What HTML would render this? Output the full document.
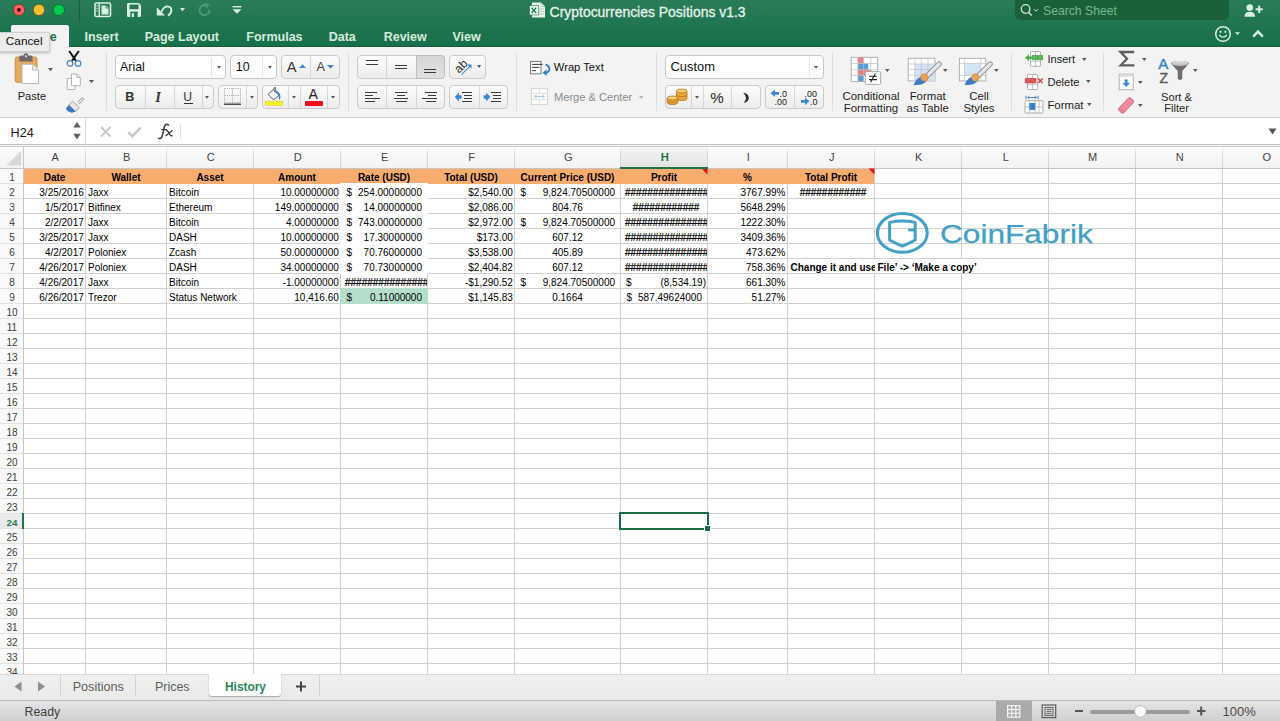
<!DOCTYPE html>
<html><head><meta charset="utf-8"><style>
html,body{margin:0;padding:0;}
body{width:1280px;height:721px;overflow:hidden;position:relative;background:#fff;font-family:"Liberation Sans", sans-serif;}
</style></head><body>
<div style="position:absolute;left:0px;top:0px;width:1280px;height:47px;background:linear-gradient(#297c58,#16704a);"></div><div style="position:absolute;left:0px;top:46px;width:1280px;height:1px;background:#125a38;"></div><svg style="position:absolute;left:0px;top:0px;" width="80" height="22" viewBox="0 0 80 22">
<circle cx="18.9" cy="9.9" r="5.7" fill="#ff6159" stroke="#6e3a2e" stroke-width="0.9"/>
<circle cx="18.9" cy="9.9" r="1.9" fill="#4d0000"/>
<circle cx="38.9" cy="9.9" r="5.7" fill="#ffbd2e" stroke="#5e5a22" stroke-width="0.9"/>
<circle cx="58.9" cy="9.9" r="5.7" fill="#00ca4e" stroke="#0f6b32" stroke-width="0.9"/>
</svg><div style="position:absolute;left:79px;top:0px;width:1px;height:22px;background:#1a5f3a;"></div><svg style="position:absolute;left:94px;top:2px;" width="18" height="16" viewBox="0 0 18 16">
<rect x="1" y="1" width="15.5" height="13.5" rx="1.5" fill="none" stroke="#d9efe2" stroke-width="1.6"/>
<line x1="5.2" y1="1" x2="5.2" y2="14.5" stroke="#d9efe2" stroke-width="1.4"/>
<rect x="2.4" y="3.3" width="1.3" height="1.2" fill="#d9efe2"/><rect x="2.4" y="5.8" width="1.3" height="1.2" fill="#d9efe2"/><rect x="2.4" y="8.3" width="1.3" height="1.2" fill="#d9efe2"/>
<path d="M7.5 3.5 H12.2 L14.5 5.8 V12.5 H7.5 Z" fill="#d9efe2"/>
<path d="M12 3.5 V6 H14.5" fill="none" stroke="#227a4b" stroke-width="0.8"/>
</svg><svg style="position:absolute;left:126px;top:2px;" width="16" height="16" viewBox="0 0 16 16">
<path d="M1 2.2 Q1 1 2.2 1 H12.8 L15 3.2 V13.8 Q15 15 13.8 15 H2.2 Q1 15 1 13.8 Z" fill="#d9efe2"/>
<rect x="3.5" y="2.6" width="9" height="4.6" fill="#227a4b"/>
<rect x="4.3" y="9.6" width="7.4" height="5.4" fill="#227a4b"/>
<rect x="5.8" y="11.3" width="2.2" height="3.7" fill="#d9efe2"/>
</svg><svg style="position:absolute;left:155px;top:3px;" width="34" height="14" viewBox="0 0 34 14">
<path d="M6.6 8.6 Q9 3.4 12.4 3.4 Q16.4 3.6 16.4 7.4 Q16.2 10.6 13 12.6" fill="none" stroke="#d9efe2" stroke-width="1.9"/>
<path d="M1.8 4.2 L1.8 12.4 L10 12.4 Z" fill="#d9efe2"/>
<path d="M25 5 L30 5 L27.5 8.2 Z" fill="#d9efe2"/>
</svg><svg style="position:absolute;left:198px;top:3px;" width="15" height="14" viewBox="0 0 15 14">
<path d="M11.5 6.8 A5 5 0 1 1 8 2.3" fill="none" stroke="#4e9a70" stroke-width="1.9"/>
<path d="M6.5 0 L12 1.2 L8 5.5 Z" fill="#4e9a70"/>
</svg><svg style="position:absolute;left:231px;top:5px;" width="12" height="10" viewBox="0 0 12 10">
<rect x="1.5" y="1" width="9" height="1.4" fill="#d9efe2"/>
<path d="M1.5 4.2 H10.5 L6 8.8 Z" fill="#d9efe2"/>
</svg><svg style="position:absolute;left:529px;top:2px;" width="17" height="16" viewBox="0 0 17 16">
<path d="M3 0.5 H12 L16 4.5 V15.5 H3 Z" fill="#e8f3ec"/>
<path d="M12 0.5 V4.5 H16" fill="none" stroke="#9cc9ae" stroke-width="0.8"/>
<g stroke="#9cc9ae" stroke-width="0.8"><line x1="9" y1="7" x2="15" y2="7"/><line x1="9" y1="9.5" x2="15" y2="9.5"/><line x1="9" y1="12" x2="15" y2="12"/></g>
<rect x="0.5" y="3.5" width="9" height="9.5" fill="#e8f3ec" stroke="#227a4b" stroke-width="0.6"/>
<path d="M2.6 5.6 L7.2 11 M7.2 5.6 L2.6 11" stroke="#227a4b" stroke-width="1.3"/>
</svg><div style="position:absolute;top:1.97px;font-size:13.95px;line-height:20px;color:#e6f2ea;font-weight:normal;white-space:pre;-webkit-text-stroke:0.3px #e6f2ea;left:549.6px;">Cryptocurrencies Positions v1.3</div><div style="position:absolute;left:1015px;top:0px;width:214px;height:20px;background:#1b6138;border-radius:0 0 5px 5px;"></div><svg style="position:absolute;left:1019px;top:3px;" width="22" height="14" viewBox="0 0 22 14">
<circle cx="6.6" cy="6" r="4.3" fill="none" stroke="#cfe6d8" stroke-width="1.3"/>
<line x1="9.6" y1="9.2" x2="12.6" y2="12.4" stroke="#cfe6d8" stroke-width="1.5"/>
<path d="M15 6.2 L17 8.2 L19 6.2" fill="none" stroke="#cfe6d8" stroke-width="1"/>
</svg><div style="position:absolute;top:0.67px;font-size:12.2px;line-height:20px;color:#79b793;font-weight:normal;white-space:pre;left:1043px;">Search Sheet</div><svg style="position:absolute;left:1243px;top:3px;" width="21" height="15" viewBox="0 0 21 15">
<circle cx="6.8" cy="4.6" r="3.3" fill="#d9efe2"/>
<path d="M1.5 13.8 Q1.5 8.8 6.8 8.8 Q12 8.8 12 13.8 Z" fill="#d9efe2"/>
<rect x="12.6" y="5.3" width="7.2" height="2" fill="#d9efe2"/>
<rect x="15.2" y="2.6" width="2" height="7.4" fill="#d9efe2"/>
</svg><div style="position:absolute;left:11px;top:25px;width:58px;height:22px;background:#f3f3f3;border-radius:2px 2px 0 0;"></div><div style="position:absolute;top:26.97px;font-size:12.5px;line-height:20px;color:#217346;font-weight:bold;white-space:pre;left:22px;">Home</div><div style="position:absolute;top:26.97px;font-size:12.5px;line-height:20px;color:#d7ebde;font-weight:bold;white-space:pre;left:84.5px;">Insert</div><div style="position:absolute;top:26.97px;font-size:12.5px;line-height:20px;color:#d7ebde;font-weight:bold;white-space:pre;left:144.7px;">Page Layout</div><div style="position:absolute;top:26.97px;font-size:12.5px;line-height:20px;color:#d7ebde;font-weight:bold;white-space:pre;left:246.3px;">Formulas</div><div style="position:absolute;top:26.97px;font-size:12.5px;line-height:20px;color:#d7ebde;font-weight:bold;white-space:pre;left:328.7px;">Data</div><div style="position:absolute;top:26.97px;font-size:12.5px;line-height:20px;color:#d7ebde;font-weight:bold;white-space:pre;left:383.7px;">Review</div><div style="position:absolute;top:26.97px;font-size:12.5px;line-height:20px;color:#d7ebde;font-weight:bold;white-space:pre;left:452.5px;">View</div><svg style="position:absolute;left:1213px;top:24px;" width="52" height="20" viewBox="0 0 52 20">
<circle cx="10" cy="10" r="7.3" fill="none" stroke="#d9efe2" stroke-width="1.5"/>
<circle cx="7.6" cy="7.8" r="1.1" fill="#d9efe2"/><circle cx="12.4" cy="7.8" r="1.1" fill="#d9efe2"/>
<path d="M6.2 11 Q10 15.2 13.8 11" fill="none" stroke="#d9efe2" stroke-width="1.4"/>
<path d="M22 8.2 L27 8.2 L24.5 11 Z" fill="#d9efe2"/>
<path d="M40.2 12.6 L45 7.6 L49.8 12.6" fill="none" stroke="#d9efe2" stroke-width="2.4"/>
</svg><div style="position:absolute;left:0px;top:47px;width:1280px;height:70px;background:#f3f3f3;"></div><div style="position:absolute;left:0px;top:117px;width:1280px;height:1px;background:#cfcfcf;"></div><div style="position:absolute;left:106px;top:53px;width:1px;height:58px;background:#dedede;"></div><div style="position:absolute;left:348px;top:53px;width:1px;height:58px;background:#dedede;"></div><div style="position:absolute;left:516px;top:53px;width:1px;height:58px;background:#dedede;"></div><div style="position:absolute;left:656px;top:53px;width:1px;height:58px;background:#dedede;"></div><div style="position:absolute;left:832px;top:53px;width:1px;height:58px;background:#dedede;"></div><div style="position:absolute;left:1011px;top:53px;width:1px;height:58px;background:#dedede;"></div><div style="position:absolute;left:1103px;top:53px;width:1px;height:58px;background:#dedede;"></div><svg style="position:absolute;left:13px;top:52px;" width="27" height="33" viewBox="0 0 27 33">
<rect x="2.2" y="5" width="21.8" height="25.2" rx="1.8" fill="#e6a95e" stroke="#c3873c" stroke-width="0.9"/>
<path d="M6.3 9.6 V5.2 Q6.3 3.6 8 3.6 H10.6 Q11 1.2 13 1.2 Q15 1.2 15.4 3.6 H18 Q19.6 3.6 19.6 5.2 V9.6 Z" fill="#6b6b6b"/>
<circle cx="13" cy="4.2" r="1" fill="#e3e3e3"/>
<path d="M9 12.2 H19.6 L25.5 18 V31.5 H9 Z" fill="#fff" stroke="#b3b3b3" stroke-width="0.9"/>
<path d="M19.6 12.2 V18 H25.5" fill="#efefef" stroke="#b3b3b3" stroke-width="0.9"/>
</svg><svg style="position:absolute;left:47px;top:67.4px;" width="7" height="5.2" viewBox="0 0 7 5.2"><path d="M1 1 H6 L3.5 4.2 Z" fill="#5a5a5a"/></svg><div style="position:absolute;top:85.75px;font-size:11.1px;line-height:20px;color:#1e1e1e;font-weight:normal;white-space:pre;left:17.7px;">Paste</div><svg style="position:absolute;left:65px;top:50px;" width="18" height="18" viewBox="0 0 18 18">
<path d="M4.2 1 L11 10.8 M13.8 1 L7 10.8" stroke="#1a1a1a" stroke-width="2.1"/>
<circle cx="5" cy="13.4" r="2.8" fill="none" stroke="#3f84c7" stroke-width="1.2"/>
<circle cx="13" cy="13.4" r="2.8" fill="none" stroke="#3f84c7" stroke-width="1.2"/>
</svg><svg style="position:absolute;left:66px;top:73px;" width="16" height="18" viewBox="0 0 16 18">
<path d="M1.2 5.5 H6.5 L9 8 V16.5 H1.2 Z" fill="#fff" stroke="#a9a9a9" stroke-width="0.9"/>
<path d="M5.5 1 H10.8 L14.3 4.5 V12.7 H5.5 Z" fill="#fff" stroke="#a9a9a9" stroke-width="0.9"/>
<path d="M10.8 1 V4.5 H14.3" fill="none" stroke="#a9a9a9" stroke-width="0.8"/>
</svg><svg style="position:absolute;left:88px;top:79.3px;" width="7" height="5.2" viewBox="0 0 7 5.2"><path d="M1 1 H6 L3.5 4.2 Z" fill="#5a5a5a"/></svg><svg style="position:absolute;left:65px;top:96px;" width="19" height="17" viewBox="0 0 19 17">
<path d="M12.6 6.4 L16.2 2.6 Q17.4 1.4 18.2 2.2 Q19 3 17.8 4.2 L14.2 8" fill="#ececec" stroke="#8a8a8a" stroke-width="0.9"/>
<path d="M7.6 5.2 L14.2 11.6 L10.6 15.4 L3.8 9 Z" fill="#e8e8e8" stroke="#8f8f8f" stroke-width="0.8"/>
<path d="M0.8 12.6 L3.8 9 L10.6 15.4 L7 16.8 Q3 16.4 0.8 12.6 Z" fill="#3b7bc2"/>
</svg><div style="position:absolute;left:115px;top:55px;width:111px;height:24px;background:#fff;border:1px solid #c8c8c8;border-radius:4px;box-sizing:border-box;"></div><div style="position:absolute;left:211px;top:58px;width:1px;height:18px;background:#e4e4e4;"></div><svg style="position:absolute;left:215.6px;top:65.3px;" width="6" height="4.8" viewBox="0 0 6 4.8"><path d="M1 1 H5 L3.0 3.8 Z" fill="#5a5a5a"/></svg><div style="position:absolute;top:56.50px;font-size:12.4px;line-height:20px;color:#111;font-weight:normal;white-space:pre;left:120px;">Arial</div><div style="position:absolute;left:230px;top:55px;width:47px;height:24px;background:#fff;border:1px solid #c8c8c8;border-radius:4px;box-sizing:border-box;"></div><div style="position:absolute;left:262px;top:58px;width:1px;height:18px;background:#e4e4e4;"></div><svg style="position:absolute;left:266.5px;top:65.3px;" width="6" height="4.8" viewBox="0 0 6 4.8"><path d="M1 1 H5 L3.0 3.8 Z" fill="#5a5a5a"/></svg><div style="position:absolute;top:56.50px;font-size:12.4px;line-height:20px;color:#111;font-weight:normal;white-space:pre;left:235.8px;">10</div><div style="position:absolute;left:281px;top:55px;width:59px;height:24px;background:linear-gradient(#fcfcfc,#ececec);border:1px solid #cbcbcb;border-radius:4px;box-sizing:border-box;"></div><div style="position:absolute;left:310px;top:56px;width:1px;height:22px;background:#d6d6d6;"></div><div style="position:absolute;top:57.34px;font-size:14.6px;line-height:20px;color:#333;font-weight:normal;white-space:pre;left:286.8px;">A</div><svg style="position:absolute;left:298px;top:63px;" width="9" height="6" viewBox="0 0 9 6"><path d="M1 5 L4.5 1.2 L8 5 Z" fill="#3b88d0"/></svg><div style="position:absolute;top:57.43px;font-size:12.6px;line-height:20px;color:#444;font-weight:normal;white-space:pre;left:316.6px;">A</div><svg style="position:absolute;left:326.3px;top:64.3px;" width="9" height="6" viewBox="0 0 9 6"><path d="M1 1 H8 L4.5 4.8 Z" fill="#3b88d0"/></svg><div style="position:absolute;left:115px;top:85px;width:99px;height:24px;background:linear-gradient(#fcfcfc,#ececec);border:1px solid #cbcbcb;border-radius:4px;box-sizing:border-box;"></div><div style="position:absolute;left:144.8px;top:86px;width:1px;height:22px;background:#d6d6d6;"></div><div style="position:absolute;left:173.7px;top:86px;width:1px;height:22px;background:#d6d6d6;"></div><div style="position:absolute;left:201.6px;top:86px;width:1px;height:22px;background:#d6d6d6;"></div><div style="position:absolute;top:87.23px;font-size:12.6px;line-height:20px;color:#333;font-weight:bold;white-space:pre;left:125.3px;">B</div><div style="position:absolute;top:86.78px;font-size:14.5px;line-height:20px;color:#333;font-weight:bold;white-space:pre;font-family:'Liberation Serif',serif;left:155.2px;"><i>I</i></div><div style="position:absolute;top:87.17px;font-size:12.2px;line-height:20px;color:#333;font-weight:normal;white-space:pre;left:183.3px;">U</div><div style="position:absolute;left:183.5px;top:103px;width:9px;height:1.3px;background:#333;"></div><svg style="position:absolute;left:204.4px;top:94.6px;" width="6" height="4.8" viewBox="0 0 6 4.8"><path d="M1 1 H5 L3.0 3.8 Z" fill="#5a5a5a"/></svg><div style="position:absolute;left:218px;top:85px;width:40px;height:24px;background:linear-gradient(#fcfcfc,#ececec);border:1px solid #cbcbcb;border-radius:4px;box-sizing:border-box;"></div><div style="position:absolute;left:246px;top:86px;width:1px;height:22px;background:#d6d6d6;"></div><svg style="position:absolute;left:223px;top:87px;" width="20" height="19" viewBox="0 0 20 19">
<g stroke="#9a9a9a" stroke-width="0.9" stroke-dasharray="1,1.2" fill="none">
<rect x="1.5" y="1.5" width="16" height="14"/><line x1="9.5" y1="1.5" x2="9.5" y2="15.5"/><line x1="1.5" y1="8.5" x2="17.5" y2="8.5"/></g>
<line x1="1" y1="17.2" x2="18" y2="17.2" stroke="#333" stroke-width="1.3"/>
</svg><svg style="position:absolute;left:248.5px;top:94.6px;" width="6" height="4.8" viewBox="0 0 6 4.8"><path d="M1 1 H5 L3.0 3.8 Z" fill="#5a5a5a"/></svg><div style="position:absolute;left:262px;top:85px;width:78px;height:24px;background:linear-gradient(#fcfcfc,#ececec);border:1px solid #cbcbcb;border-radius:4px;box-sizing:border-box;"></div><div style="position:absolute;left:288px;top:86px;width:1px;height:22px;background:#d6d6d6;"></div><div style="position:absolute;left:300px;top:86px;width:1px;height:22px;background:#d6d6d6;"></div><div style="position:absolute;left:327.3px;top:86px;width:1px;height:22px;background:#d6d6d6;"></div><svg style="position:absolute;left:264px;top:86px;" width="21" height="20" viewBox="0 0 21 20">
<path d="M4.2 8.4 L9.4 3.6 L14.8 9.2 L9.6 14 Z" fill="#fdfdfd" stroke="#555" stroke-width="1"/>
<path d="M9.8 3.4 Q10.4 0.8 11.2 1.4 V5.6" fill="none" stroke="#444" stroke-width="1"/>
<path d="M10.2 5 Q14.6 5.6 15.6 10.2 Q15.8 12.4 15 13" fill="none" stroke="#3b80c6" stroke-width="1.7"/>
<rect x="1.2" y="15.1" width="17.6" height="4.4" fill="#f4ef2a" stroke="#dcd42a" stroke-width="0.5"/>
</svg><svg style="position:absolute;left:290.7px;top:94.6px;" width="6" height="4.8" viewBox="0 0 6 4.8"><path d="M1 1 H5 L3.0 3.8 Z" fill="#5a5a5a"/></svg><div style="position:absolute;top:84.18px;font-size:14.2px;line-height:20px;color:#222;font-weight:normal;white-space:pre;left:308.6px;">A</div><div style="position:absolute;left:305.2px;top:101px;width:17.6px;height:4.8px;background:#f2101a;border-radius:1px;"></div><svg style="position:absolute;left:330.4px;top:94.6px;" width="6" height="4.8" viewBox="0 0 6 4.8"><path d="M1 1 H5 L3.0 3.8 Z" fill="#5a5a5a"/></svg><div style="position:absolute;left:357px;top:55px;width:88px;height:24px;background:linear-gradient(#fcfcfc,#ececec);border:1px solid #cbcbcb;border-radius:4px;box-sizing:border-box;"></div><div style="position:absolute;left:415.7px;top:55px;width:29.3px;height:24px;background:linear-gradient(#d5d5d5,#e0e0e0);border:1px solid #bdbdbd;border-radius:0 4px 4px 0;box-sizing:border-box;"></div><div style="position:absolute;left:386.4px;top:56px;width:1px;height:22px;background:#d6d6d6;"></div><div style="position:absolute;left:366px;top:60px;width:12px;height:1px;background:#3a3a3a;"></div><div style="position:absolute;left:366px;top:64px;width:12px;height:1px;background:#3a3a3a;"></div><div style="position:absolute;left:395px;top:65px;width:12px;height:1px;background:#3a3a3a;"></div><div style="position:absolute;left:395px;top:68px;width:12px;height:1px;background:#3a3a3a;"></div><div style="position:absolute;left:424px;top:69px;width:12px;height:1px;background:#3a3a3a;"></div><div style="position:absolute;left:424px;top:72px;width:12px;height:1px;background:#3a3a3a;"></div><div style="position:absolute;left:449px;top:55px;width:37px;height:24px;background:linear-gradient(#fcfcfc,#ececec);border:1px solid #cbcbcb;border-radius:4px;box-sizing:border-box;"></div><svg style="position:absolute;left:453px;top:58px;" width="22" height="18" viewBox="0 0 22 18">
<text x="0" y="0" transform="translate(6 15.8) rotate(-45)" font-family="Liberation Sans" font-size="12" fill="#2a2a2a">ab</text>
<path d="M8.5 16.6 L17.8 7.3" stroke="#3b88d0" stroke-width="1.1"/>
<path d="M14.2 6.6 L18.6 6.4 L18.4 10.8 Z" fill="#3b88d0"/>
</svg><svg style="position:absolute;left:476px;top:64.3px;" width="6.3" height="5" viewBox="0 0 6.3 5"><path d="M1 1 H5.3 L3.15 4 Z" fill="#5a5a5a"/></svg><div style="position:absolute;left:357px;top:85px;width:88px;height:24px;background:linear-gradient(#fcfcfc,#ececec);border:1px solid #cbcbcb;border-radius:4px;box-sizing:border-box;"></div><div style="position:absolute;left:386.4px;top:86px;width:1px;height:22px;background:#d6d6d6;"></div><div style="position:absolute;left:415.7px;top:86px;width:1px;height:22px;background:#d6d6d6;"></div><div style="position:absolute;left:365px;top:92px;width:12px;height:1px;background:#3a3a3a;"></div><div style="position:absolute;left:365px;top:95px;width:8px;height:1px;background:#3a3a3a;"></div><div style="position:absolute;left:365px;top:98px;width:15px;height:1px;background:#3a3a3a;"></div><div style="position:absolute;left:365px;top:101px;width:10px;height:1px;background:#3a3a3a;"></div><div style="position:absolute;left:395px;top:92px;width:12px;height:1px;background:#3a3a3a;"></div><div style="position:absolute;left:397px;top:95px;width:8px;height:1px;background:#3a3a3a;"></div><div style="position:absolute;left:394px;top:98px;width:14px;height:1px;background:#3a3a3a;"></div><div style="position:absolute;left:396px;top:101px;width:11px;height:1px;background:#3a3a3a;"></div><div style="position:absolute;left:425px;top:92px;width:12px;height:1px;background:#3a3a3a;"></div><div style="position:absolute;left:428px;top:95px;width:8px;height:1px;background:#3a3a3a;"></div><div style="position:absolute;left:422px;top:98px;width:15px;height:1px;background:#3a3a3a;"></div><div style="position:absolute;left:426px;top:101px;width:10px;height:1px;background:#3a3a3a;"></div><div style="position:absolute;left:449px;top:85px;width:59px;height:24px;background:linear-gradient(#fcfcfc,#ececec);border:1px solid #cbcbcb;border-radius:4px;box-sizing:border-box;"></div><div style="position:absolute;left:478.5px;top:86px;width:1px;height:22px;background:#d6d6d6;"></div><div style="position:absolute;left:462px;top:92px;width:10px;height:1px;background:#3a3a3a;"></div><div style="position:absolute;left:464px;top:95px;width:8px;height:1px;background:#3a3a3a;"></div><div style="position:absolute;left:464px;top:98px;width:8px;height:1px;background:#3a3a3a;"></div><div style="position:absolute;left:462px;top:101px;width:10px;height:1px;background:#3a3a3a;"></div><div style="position:absolute;left:491px;top:92px;width:10px;height:1px;background:#3a3a3a;"></div><div style="position:absolute;left:493px;top:95px;width:8px;height:1px;background:#3a3a3a;"></div><div style="position:absolute;left:493px;top:98px;width:8px;height:1px;background:#3a3a3a;"></div><div style="position:absolute;left:491px;top:101px;width:10px;height:1px;background:#3a3a3a;"></div><svg style="position:absolute;left:454px;top:91px;" width="8" height="12" viewBox="0 0 8 12"><path d="M0.8 6 L5 1.6 V4.2 H7.6 V7.8 H5 V10.4 Z" fill="#3b88d0"/></svg><svg style="position:absolute;left:483px;top:91px;" width="8" height="12" viewBox="0 0 8 12"><path d="M7.4 6 L3.2 1.6 V4.2 H0.6 V7.8 H3.2 V10.4 Z" fill="#3b88d0"/></svg><svg style="position:absolute;left:529px;top:60px;" width="23" height="16" viewBox="0 0 23 16">
<rect x="1.6" y="1.4" width="10.4" height="12.4" fill="#fff" stroke="#6a6a6a" stroke-width="0.9"/>
<g stroke="#333" stroke-width="1"><line x1="3.2" y1="4.4" x2="13.6" y2="4.4"/><line x1="3.2" y1="7.4" x2="10.4" y2="7.4"/><line x1="3.2" y1="10.6" x2="7.2" y2="10.6"/></g>
<path d="M16.6 4.6 Q20.4 5.6 20.4 9 Q20.2 12.4 16.6 12.8" fill="none" stroke="#2f7bc4" stroke-width="1.8"/>
<path d="M13.4 12.8 L17.6 9.6 V15.8 Z" fill="#2f7bc4"/>
</svg><div style="position:absolute;top:56.92px;font-size:11.2px;line-height:20px;color:#111;font-weight:normal;white-space:pre;left:553.8px;">Wrap Text</div><svg style="position:absolute;left:530px;top:87px;" width="19" height="19" viewBox="0 0 19 19">
<rect x="1.5" y="1.4" width="16" height="16.2" fill="#fbfbfb" stroke="#d2d2d2" stroke-width="0.9"/>
<g stroke="#dadada" stroke-width="0.8"><line x1="1.5" y1="6.5" x2="17.5" y2="6.5"/><line x1="1.5" y1="12.4" x2="17.5" y2="12.4"/><line x1="9.5" y1="1.4" x2="9.5" y2="6.5"/><line x1="9.5" y1="12.4" x2="9.5" y2="17.6"/></g>
<path d="M5.4 9.5 H13.6" stroke="#a9c8e6" stroke-width="1"/>
<path d="M3.8 9.5 L6.4 7.6 V11.4 Z M15.2 9.5 L12.6 7.6 V11.4 Z" fill="#a9c8e6"/>
</svg><div style="position:absolute;top:86.95px;font-size:11.1px;line-height:20px;color:#8c8c8c;font-weight:normal;white-space:pre;left:554px;">Merge &amp; Center</div><svg style="position:absolute;left:638px;top:95.4px;" width="6.5" height="5" viewBox="0 0 6.5 5"><path d="M1 1 H5.5 L3.25 4 Z" fill="#b5b5b5"/></svg><div style="position:absolute;left:665px;top:55px;width:159px;height:24px;background:#fff;border:1px solid #c8c8c8;border-radius:4px;box-sizing:border-box;"></div><div style="position:absolute;left:809px;top:58px;width:1px;height:18px;background:#e4e4e4;"></div><svg style="position:absolute;left:813px;top:65.3px;" width="6" height="4.8" viewBox="0 0 6 4.8"><path d="M1 1 H5 L3.0 3.8 Z" fill="#5a5a5a"/></svg><div style="position:absolute;top:57.03px;font-size:12.9px;line-height:20px;color:#111;font-weight:normal;white-space:pre;left:670.5px;">Custom</div><div style="position:absolute;left:665px;top:85px;width:96px;height:24px;background:linear-gradient(#fcfcfc,#ececec);border:1px solid #cbcbcb;border-radius:4px;box-sizing:border-box;"></div><div style="position:absolute;left:691px;top:86px;width:1px;height:22px;background:#d6d6d6;"></div><div style="position:absolute;left:702.5px;top:86px;width:1px;height:22px;background:#d6d6d6;"></div><div style="position:absolute;left:731px;top:86px;width:1px;height:22px;background:#d6d6d6;"></div><svg style="position:absolute;left:666px;top:88px;" width="22" height="18" viewBox="0 0 22 18">
<g stroke="#a46a14" stroke-width="0.7">
<path d="M10.4 3 V10.6 A5.3 2 0 0 0 21 10.6 V3 Z" fill="#e8a63a"/>
<ellipse cx="15.7" cy="3" rx="5.3" ry="2" fill="#f7cd6e"/>
<path d="M10.4 6.6 A5.3 2 0 0 0 21 6.6" fill="none"/>
<path d="M1.2 10 V14.6 A5.3 2 0 0 0 11.8 14.6 V10 Z" fill="#e8a63a"/>
<ellipse cx="6.5" cy="10" rx="5.3" ry="2" fill="#f7cd6e"/>
<path d="M1.2 12.4 A5.3 2 0 0 0 11.8 12.4" fill="none"/>
</g></svg><svg style="position:absolute;left:693.5px;top:94.6px;" width="6" height="4.8" viewBox="0 0 6 4.8"><path d="M1 1 H5 L3.0 3.8 Z" fill="#5a5a5a"/></svg><div style="position:absolute;top:87.53px;font-size:15.2px;line-height:20px;color:#2a2a2a;font-weight:normal;white-space:pre;left:417px;width:600px;text-align:center;">%</div><svg style="position:absolute;left:741px;top:91px;" width="10" height="13" viewBox="0 0 10 13"><path d="M2.2 1.8 Q7.8 2.6 7.8 6.9 Q7.6 11 2.6 11.8 Q5.2 9.6 5 6.8 Q4.8 4.2 2.2 1.8 Z" fill="#2a2a2a"/></svg><div style="position:absolute;left:765px;top:85px;width:59px;height:24px;background:linear-gradient(#fcfcfc,#ececec);border:1px solid #cbcbcb;border-radius:4px;box-sizing:border-box;"></div><div style="position:absolute;left:794px;top:86px;width:1px;height:22px;background:#d6d6d6;"></div><svg style="position:absolute;left:769px;top:88px;" width="22" height="18" viewBox="0 0 22 18">
<path d="M1.5 5.3 L6 1.6 V3.9 H10 V6.7 H6 V9 Z" fill="#3b88d0"/>
<text x="10.6" y="8.6" font-family="Liberation Sans" font-size="9" fill="#222">.0</text>
<text x="5.4" y="16.6" font-family="Liberation Sans" font-size="9" fill="#222">.00</text>
</svg><svg style="position:absolute;left:798px;top:88px;" width="22" height="18" viewBox="0 0 22 18">
<text x="6.6" y="8.6" font-family="Liberation Sans" font-size="9" fill="#222">.00</text>
<path d="M11.5 13.3 L7 9.6 V11.9 H3 V14.7 H7 V17 Z" fill="#3b88d0"/>
<text x="12" y="16.6" font-family="Liberation Sans" font-size="9" fill="#222">.0</text>
</svg><svg style="position:absolute;left:850px;top:56px;" width="33" height="30" viewBox="0 0 33 30">
<rect x="1.2" y="1.3" width="26.5" height="24.2" fill="#fff" stroke="#a9a9a9" stroke-width="0.9"/>
<rect x="7.9" y="1.5" width="5.7" height="6" fill="#e77f82"/>
<rect x="7.9" y="7.5" width="10.3" height="6.2" fill="#5b9bd5"/>
<rect x="7.9" y="13.7" width="12.9" height="5.6" fill="#e77f82"/>
<rect x="7.9" y="19.3" width="5.7" height="6" fill="#5b9bd5"/>
<g stroke="#bdbdbd" stroke-width="0.7">
<line x1="7.9" y1="1.3" x2="7.9" y2="25.5"/><line x1="13.6" y1="1.3" x2="13.6" y2="25.5"/><line x1="20.8" y1="1.3" x2="20.8" y2="25.5"/>
<line x1="1.2" y1="7.5" x2="27.7" y2="7.5"/><line x1="1.2" y1="13.7" x2="27.7" y2="13.7"/><line x1="1.2" y1="19.3" x2="27.7" y2="19.3"/></g>
<rect x="15.3" y="15.6" width="15.4" height="12.8" rx="1.2" fill="#fff" stroke="#9f9f9f" stroke-width="0.9"/>
<path d="M19 20.2 H27 M19 23.6 H27 M25.4 17.6 L20.6 26.2" stroke="#222" stroke-width="1.1"/>
</svg><svg style="position:absolute;left:884px;top:67.8px;" width="6.6" height="5" viewBox="0 0 6.6 5"><path d="M1 1 H5.6 L3.3 4 Z" fill="#5a5a5a"/></svg><div style="position:absolute;top:86.05px;font-size:11.4px;line-height:20px;color:#1e1e1e;font-weight:normal;white-space:pre;left:571px;width:600px;text-align:center;">Conditional</div><div style="position:absolute;top:97.85px;font-size:11.4px;line-height:20px;color:#1e1e1e;font-weight:normal;white-space:pre;left:571px;width:600px;text-align:center;">Formatting</div><svg style="position:absolute;left:907px;top:56px;" width="35" height="30" viewBox="0 0 35 30">
<rect x="1.2" y="2.3" width="26.8" height="22.6" fill="#fff" stroke="#a9a9a9" stroke-width="0.9"/>
<rect x="7.8" y="8" width="20" height="16.8" fill="#d3e4f5"/>
<g stroke="#c2c2c2" stroke-width="0.7">
<line x1="7.8" y1="2.3" x2="7.8" y2="24.9"/><line x1="14.4" y1="2.3" x2="14.4" y2="24.9"/><line x1="21" y1="2.3" x2="21" y2="24.9"/>
<line x1="1.2" y1="8" x2="28" y2="8"/><line x1="1.2" y1="13.6" x2="28" y2="13.6"/><line x1="1.2" y1="19.2" x2="28" y2="19.2"/></g>
<path d="M32.2 8 L19.4 20.6" stroke="#8c8c8c" stroke-width="5.2" stroke-linecap="round"/>
<path d="M32.2 8 L19.4 20.6" stroke="#e6e6e6" stroke-width="3.4" stroke-linecap="round"/>
<path d="M6.6 29 Q8.6 23.4 13.4 20.8 L19.8 24.6 Q16.4 29.8 6.6 29 Z" fill="#3b7cc4"/>
<circle cx="17.4" cy="21.4" r="3.7" fill="#e3a45a" stroke="#c6863e" stroke-width="0.6"/>
</svg><svg style="position:absolute;left:942px;top:67.8px;" width="6.6" height="5" viewBox="0 0 6.6 5"><path d="M1 1 H5.6 L3.3 4 Z" fill="#5a5a5a"/></svg><div style="position:absolute;top:86.05px;font-size:11.4px;line-height:20px;color:#1e1e1e;font-weight:normal;white-space:pre;left:627.7px;width:600px;text-align:center;">Format</div><div style="position:absolute;top:97.85px;font-size:11.4px;line-height:20px;color:#1e1e1e;font-weight:normal;white-space:pre;left:627.7px;width:600px;text-align:center;">as Table</div><svg style="position:absolute;left:958px;top:56px;" width="35" height="30" viewBox="0 0 35 30">
<rect x="1.4" y="2.3" width="26.4" height="22.6" fill="#fff" stroke="#a9a9a9" stroke-width="0.9"/>
<rect x="6.4" y="7.4" width="16.4" height="12" fill="#d3e4f5"/>
<g stroke="#c2c2c2" stroke-width="0.7"><line x1="1.4" y1="7.4" x2="27.8" y2="7.4"/><line x1="6.4" y1="2.3" x2="6.4" y2="24.9"/><line x1="22.8" y1="2.3" x2="22.8" y2="24.9"/><line x1="1.4" y1="19.4" x2="27.8" y2="19.4"/></g>
<path d="M32.2 8 L19.4 20.6" stroke="#8c8c8c" stroke-width="5.2" stroke-linecap="round"/>
<path d="M32.2 8 L19.4 20.6" stroke="#e6e6e6" stroke-width="3.4" stroke-linecap="round"/>
<path d="M6.6 29 Q8.6 23.4 13.4 20.8 L19.8 24.6 Q16.4 29.8 6.6 29 Z" fill="#3b7cc4"/>
<circle cx="17.4" cy="21.4" r="3.7" fill="#e3a45a" stroke="#c6863e" stroke-width="0.6"/>
</svg><svg style="position:absolute;left:993px;top:67.8px;" width="6.6" height="5" viewBox="0 0 6.6 5"><path d="M1 1 H5.6 L3.3 4 Z" fill="#5a5a5a"/></svg><div style="position:absolute;top:86.05px;font-size:11.4px;line-height:20px;color:#1e1e1e;font-weight:normal;white-space:pre;left:679px;width:600px;text-align:center;">Cell</div><div style="position:absolute;top:97.85px;font-size:11.4px;line-height:20px;color:#1e1e1e;font-weight:normal;white-space:pre;left:679px;width:600px;text-align:center;">Styles</div><svg style="position:absolute;left:1023px;top:50px;" width="22" height="19" viewBox="0 0 22 19">
<rect x="7.5" y="1.5" width="10" height="14.8" rx="0.8" fill="#fff" stroke="#a5a5a5" stroke-width="0.9"/>
<g stroke="#b5b5b5" stroke-width="0.8"><line x1="12.5" y1="1.5" x2="12.5" y2="16.3"/><line x1="7.5" y1="11.3" x2="17.5" y2="11.3"/></g>
<rect x="9.2" y="5.6" width="10.6" height="4.2" fill="#5cb85c" stroke="#3d9a3d" stroke-width="0.6"/>
<line x1="14.5" y1="5.6" x2="14.5" y2="9.8" stroke="#3d9a3d" stroke-width="0.5"/>
<path d="M2 7.7 L6 4.2 V11.2 Z" fill="#4cae4c"/><rect x="5.5" y="6.5" width="3.5" height="2.4" fill="#4cae4c"/>
</svg><div style="position:absolute;top:49.35px;font-size:11.1px;line-height:20px;color:#1e1e1e;font-weight:normal;white-space:pre;left:1047.4px;">Insert</div><svg style="position:absolute;left:1081.4px;top:56.8px;" width="6.6" height="5" viewBox="0 0 6.6 5"><path d="M1 1 H5.6 L3.3 4 Z" fill="#5a5a5a"/></svg><svg style="position:absolute;left:1023px;top:73px;" width="22" height="19" viewBox="0 0 22 19">
<rect x="4.5" y="1.5" width="10.2" height="15" rx="0.8" fill="#fff" stroke="#a5a5a5" stroke-width="0.9"/>
<g stroke="#b5b5b5" stroke-width="0.8"><line x1="9.6" y1="1.5" x2="9.6" y2="16.5"/><line x1="4.5" y1="11.4" x2="14.7" y2="11.4"/></g>
<rect x="2.2" y="5.3" width="10.8" height="4.6" fill="#e05858" stroke="#c43c3c" stroke-width="0.6"/>
<line x1="7.6" y1="5.3" x2="7.6" y2="9.9" stroke="#c43c3c" stroke-width="0.5"/>
<path d="M15.2 5.6 L19.6 10 M19.6 5.6 L15.2 10" stroke="#d94b4b" stroke-width="1.5"/>
</svg><div style="position:absolute;top:71.95px;font-size:11.1px;line-height:20px;color:#1e1e1e;font-weight:normal;white-space:pre;left:1047.4px;">Delete</div><svg style="position:absolute;left:1085px;top:79.3px;" width="6.6" height="5" viewBox="0 0 6.6 5"><path d="M1 1 H5.6 L3.3 4 Z" fill="#5a5a5a"/></svg><svg style="position:absolute;left:1023px;top:95px;" width="22" height="19" viewBox="0 0 22 19">
<path d="M4.8 2.5 H13.2" stroke="#3b80c6" stroke-width="0.9"/><path d="M4 2.5 L6.2 1 V4 Z M14 2.5 L11.8 1 V4 Z" fill="#3b80c6"/>
<g stroke="#3b80c6" stroke-width="0.9"><line x1="3" y1="0.8" x2="3" y2="4.2"/><line x1="15" y1="0.8" x2="15" y2="4.2"/></g>
<rect x="2" y="5.6" width="18" height="12.4" rx="0.8" fill="#fff" stroke="#a5a5a5" stroke-width="0.9"/>
<g stroke="#b5b5b5" stroke-width="0.8"><line x1="6.2" y1="5.6" x2="6.2" y2="18"/><line x1="12.2" y1="5.6" x2="12.2" y2="18"/><line x1="16" y1="5.6" x2="16" y2="18"/><line x1="2" y1="12" x2="20" y2="12"/></g>
<rect x="6.4" y="7.9" width="5.8" height="7" fill="#3b80c6"/>
</svg><div style="position:absolute;top:94.85px;font-size:11.4px;line-height:20px;color:#1e1e1e;font-weight:normal;white-space:pre;left:1047.4px;">Format</div><svg style="position:absolute;left:1085.6px;top:102.2px;" width="6.6" height="5" viewBox="0 0 6.6 5"><path d="M1 1 H5.6 L3.3 4 Z" fill="#5a5a5a"/></svg><svg style="position:absolute;left:1118px;top:50px;" width="17" height="18" viewBox="0 0 17 18"><path d="M15 3.2 V2 H2.6 L9 8.7 L2.6 15.4 H15.2 V14.2" fill="none" stroke="#5e5e5e" stroke-width="2.3" stroke-linejoin="miter"/></svg><svg style="position:absolute;left:1140.5px;top:56.6px;" width="6.6" height="5" viewBox="0 0 6.6 5"><path d="M1 1 H5.6 L3.3 4 Z" fill="#5a5a5a"/></svg><svg style="position:absolute;left:1118px;top:73px;" width="17" height="18" viewBox="0 0 17 18">
<rect x="1.2" y="1.2" width="14" height="15.5" fill="#fff" stroke="#a9a9a9" stroke-width="0.9"/>
<rect x="1.6" y="1.6" width="13.2" height="2.6" fill="#e3e3e3"/>
<path d="M6.8 6.5 H9.6 V10 H12 L8.2 14 L4.4 10 H6.8 Z" fill="#3b88d0"/>
</svg><svg style="position:absolute;left:1137px;top:80px;" width="6.6" height="5" viewBox="0 0 6.6 5"><path d="M1 1 H5.6 L3.3 4 Z" fill="#5a5a5a"/></svg><svg style="position:absolute;left:1117px;top:96px;" width="18" height="18" viewBox="0 0 18 18">
<path d="M2 12 L11 2.5 Q12.5 1 14 2.3 L16 4.2 Q17.4 5.8 16 7.2 L7 16.5 Q5.6 17.8 4.2 16.5 L2 14.5 Q0.8 13.2 2 12 Z" fill="#f08aa0" stroke="#c95c74" stroke-width="0.9"/>
<path d="M2.5 12.2 L7.2 16.6" stroke="#d06c84" stroke-width="0.8"/>
</svg><svg style="position:absolute;left:1137px;top:102.6px;" width="6.6" height="5" viewBox="0 0 6.6 5"><path d="M1 1 H5.6 L3.3 4 Z" fill="#5a5a5a"/></svg><div style="position:absolute;top:53.60px;font-size:15px;line-height:20px;color:#3b84cc;font-weight:normal;white-space:pre;-webkit-text-stroke:0.45px #3b84cc;left:1158.2px;">A</div><div style="position:absolute;top:67.75px;font-size:14px;line-height:20px;color:#5a5a5a;font-weight:normal;white-space:pre;-webkit-text-stroke:0.45px #5a5a5a;left:1159.4px;">Z</div><svg style="position:absolute;left:1170px;top:59px;" width="21" height="22" viewBox="0 0 21 22">
<defs><linearGradient id="fun" x1="0" y1="0" x2="0" y2="1"><stop offset="0" stop-color="#e4e4e4"/><stop offset="1" stop-color="#b4b4b4"/></linearGradient></defs>
<path d="M1 4.6 Q1 2 10 2 Q19 2 19 4.6 L12.3 12 V19.6 Q12 21 10 21 Q8 21 7.7 19.6 V12 Z" fill="#6e6e6e"/>
<ellipse cx="10" cy="4.4" rx="8.4" ry="2.6" fill="url(#fun)"/>
</svg><svg style="position:absolute;left:1191.5px;top:67.8px;" width="6.6" height="5" viewBox="0 0 6.6 5"><path d="M1 1 H5.6 L3.3 4 Z" fill="#5a5a5a"/></svg><div style="position:absolute;top:86.85px;font-size:11.1px;line-height:20px;color:#1e1e1e;font-weight:normal;white-space:pre;left:876.5px;width:600px;text-align:center;">Sort &amp;</div><div style="position:absolute;top:98.05px;font-size:11.1px;line-height:20px;color:#1e1e1e;font-weight:normal;white-space:pre;left:876.5px;width:600px;text-align:center;">Filter</div><div style="position:absolute;left:-2px;top:32px;width:50px;height:18px;background:#ececec;border:1px solid #cfcfcf;border-radius:2px;box-shadow:0 1px 3px rgba(0,0,0,0.25);"></div><div style="position:absolute;top:30.81px;font-size:11.8px;line-height:20px;color:#111;font-weight:normal;white-space:pre;left:5.8px;">Cancel</div><div style="position:absolute;left:0px;top:118px;width:1280px;height:26px;background:#ffffff;"></div><div style="position:absolute;left:0px;top:144px;width:1280px;height:1px;background:#c3c3c3;"></div><div style="position:absolute;left:0px;top:145px;width:1280px;height:1px;background:#f1f1f1;"></div><div style="position:absolute;left:0px;top:146px;width:1280px;height:1px;background:#cdcdcd;"></div><div style="position:absolute;top:123.03px;font-size:12.6px;line-height:20px;color:#1a1a1a;font-weight:normal;white-space:pre;left:10.6px;">H24</div><svg style="position:absolute;left:72px;top:121px;" width="10" height="20" viewBox="0 0 10 20">
<path d="M1.3 6.6 L5 1 L8.7 6.6 Z" fill="#5f5f5f"/>
<path d="M1.3 12.8 L5 18.4 L8.7 12.8 Z" fill="#5f5f5f"/>
</svg><div style="position:absolute;left:85px;top:118px;width:1px;height:26px;background:#dcdcdc;"></div><svg style="position:absolute;left:98px;top:124px;" width="46" height="16" viewBox="0 0 46 16">
<path d="M3 3 L12.5 12.5 M12.5 3 L3 12.5" stroke="#c9c9c9" stroke-width="2.1"/>
<path d="M30.4 8.2 L34.4 12.4 L42.6 3.6" fill="none" stroke="#c9c9c9" stroke-width="2.3"/>
</svg><svg style="position:absolute;left:150px;top:118px;" width="26" height="24" viewBox="0 0 26 24">
<path d="M18.8 7.6 Q18 6 16.4 6.3 Q14.8 6.7 14.1 10 L12.5 17.2 Q11.7 20.8 9.6 20.7 Q8.4 20.6 8.5 19.6" fill="none" stroke="#3a3a3a" stroke-width="1.45"/>
<path d="M11.3 11.5 H16.9" stroke="#3a3a3a" stroke-width="1.1"/>
<path d="M15.9 12.6 Q17 11.8 17.9 13.3 L20.3 17.2 Q21.1 18.4 22.6 17.5" fill="none" stroke="#3a3a3a" stroke-width="1.35"/>
<path d="M22.6 12.3 L15.6 18" stroke="#3a3a3a" stroke-width="1.25"/>
</svg><div style="position:absolute;left:180px;top:124px;width:1px;height:15px;background:#e0e0e0;"></div><svg style="position:absolute;left:1267px;top:127px;" width="11" height="9" viewBox="0 0 11 9"><path d="M1.5 1.5 L9.5 1.5 L5.5 7.5 Z" fill="#555"/></svg><div style="position:absolute;left:0px;top:147px;width:1280px;height:21px;background:linear-gradient(#fbfbfb,#f3f3f3);"></div><div style="position:absolute;left:0px;top:169px;width:23px;height:505px;background:#f9f9f9;"></div><div style="position:absolute;left:620px;top:147px;width:87px;height:21px;background:linear-gradient(#f4f4f4,#e3e3e3);"></div><div style="position:absolute;left:0px;top:514px;width:23px;height:14px;background:#ebebeb;"></div><div style="position:absolute;left:0px;top:183px;width:23px;height:1px;background:#e2e2e2;"></div><div style="position:absolute;left:23px;top:183px;width:1257px;height:1px;background:#d1d1d1;"></div><div style="position:absolute;left:0px;top:198px;width:23px;height:1px;background:#e2e2e2;"></div><div style="position:absolute;left:23px;top:198px;width:1257px;height:1px;background:#d1d1d1;"></div><div style="position:absolute;left:0px;top:213px;width:23px;height:1px;background:#e2e2e2;"></div><div style="position:absolute;left:23px;top:213px;width:1257px;height:1px;background:#d1d1d1;"></div><div style="position:absolute;left:0px;top:228px;width:23px;height:1px;background:#e2e2e2;"></div><div style="position:absolute;left:23px;top:228px;width:1257px;height:1px;background:#d1d1d1;"></div><div style="position:absolute;left:0px;top:243px;width:23px;height:1px;background:#e2e2e2;"></div><div style="position:absolute;left:23px;top:243px;width:1257px;height:1px;background:#d1d1d1;"></div><div style="position:absolute;left:0px;top:258px;width:23px;height:1px;background:#e2e2e2;"></div><div style="position:absolute;left:23px;top:258px;width:1257px;height:1px;background:#d1d1d1;"></div><div style="position:absolute;left:0px;top:273px;width:23px;height:1px;background:#e2e2e2;"></div><div style="position:absolute;left:23px;top:273px;width:1257px;height:1px;background:#d1d1d1;"></div><div style="position:absolute;left:0px;top:288px;width:23px;height:1px;background:#e2e2e2;"></div><div style="position:absolute;left:23px;top:288px;width:1257px;height:1px;background:#d1d1d1;"></div><div style="position:absolute;left:0px;top:303px;width:23px;height:1px;background:#e2e2e2;"></div><div style="position:absolute;left:23px;top:303px;width:1257px;height:1px;background:#d1d1d1;"></div><div style="position:absolute;left:0px;top:318px;width:23px;height:1px;background:#e2e2e2;"></div><div style="position:absolute;left:23px;top:318px;width:1257px;height:1px;background:#d1d1d1;"></div><div style="position:absolute;left:0px;top:333px;width:23px;height:1px;background:#e2e2e2;"></div><div style="position:absolute;left:23px;top:333px;width:1257px;height:1px;background:#d1d1d1;"></div><div style="position:absolute;left:0px;top:348px;width:23px;height:1px;background:#e2e2e2;"></div><div style="position:absolute;left:23px;top:348px;width:1257px;height:1px;background:#d1d1d1;"></div><div style="position:absolute;left:0px;top:363px;width:23px;height:1px;background:#e2e2e2;"></div><div style="position:absolute;left:23px;top:363px;width:1257px;height:1px;background:#d1d1d1;"></div><div style="position:absolute;left:0px;top:378px;width:23px;height:1px;background:#e2e2e2;"></div><div style="position:absolute;left:23px;top:378px;width:1257px;height:1px;background:#d1d1d1;"></div><div style="position:absolute;left:0px;top:393px;width:23px;height:1px;background:#e2e2e2;"></div><div style="position:absolute;left:23px;top:393px;width:1257px;height:1px;background:#d1d1d1;"></div><div style="position:absolute;left:0px;top:408px;width:23px;height:1px;background:#e2e2e2;"></div><div style="position:absolute;left:23px;top:408px;width:1257px;height:1px;background:#d1d1d1;"></div><div style="position:absolute;left:0px;top:423px;width:23px;height:1px;background:#e2e2e2;"></div><div style="position:absolute;left:23px;top:423px;width:1257px;height:1px;background:#d1d1d1;"></div><div style="position:absolute;left:0px;top:438px;width:23px;height:1px;background:#e2e2e2;"></div><div style="position:absolute;left:23px;top:438px;width:1257px;height:1px;background:#d1d1d1;"></div><div style="position:absolute;left:0px;top:453px;width:23px;height:1px;background:#e2e2e2;"></div><div style="position:absolute;left:23px;top:453px;width:1257px;height:1px;background:#d1d1d1;"></div><div style="position:absolute;left:0px;top:468px;width:23px;height:1px;background:#e2e2e2;"></div><div style="position:absolute;left:23px;top:468px;width:1257px;height:1px;background:#d1d1d1;"></div><div style="position:absolute;left:0px;top:483px;width:23px;height:1px;background:#e2e2e2;"></div><div style="position:absolute;left:23px;top:483px;width:1257px;height:1px;background:#d1d1d1;"></div><div style="position:absolute;left:0px;top:498px;width:23px;height:1px;background:#e2e2e2;"></div><div style="position:absolute;left:23px;top:498px;width:1257px;height:1px;background:#d1d1d1;"></div><div style="position:absolute;left:0px;top:513px;width:23px;height:1px;background:#e2e2e2;"></div><div style="position:absolute;left:23px;top:513px;width:1257px;height:1px;background:#d1d1d1;"></div><div style="position:absolute;left:0px;top:528px;width:23px;height:1px;background:#e2e2e2;"></div><div style="position:absolute;left:23px;top:528px;width:1257px;height:1px;background:#d1d1d1;"></div><div style="position:absolute;left:0px;top:543px;width:23px;height:1px;background:#e2e2e2;"></div><div style="position:absolute;left:23px;top:543px;width:1257px;height:1px;background:#d1d1d1;"></div><div style="position:absolute;left:0px;top:558px;width:23px;height:1px;background:#e2e2e2;"></div><div style="position:absolute;left:23px;top:558px;width:1257px;height:1px;background:#d1d1d1;"></div><div style="position:absolute;left:0px;top:573px;width:23px;height:1px;background:#e2e2e2;"></div><div style="position:absolute;left:23px;top:573px;width:1257px;height:1px;background:#d1d1d1;"></div><div style="position:absolute;left:0px;top:588px;width:23px;height:1px;background:#e2e2e2;"></div><div style="position:absolute;left:23px;top:588px;width:1257px;height:1px;background:#d1d1d1;"></div><div style="position:absolute;left:0px;top:603px;width:23px;height:1px;background:#e2e2e2;"></div><div style="position:absolute;left:23px;top:603px;width:1257px;height:1px;background:#d1d1d1;"></div><div style="position:absolute;left:0px;top:618px;width:23px;height:1px;background:#e2e2e2;"></div><div style="position:absolute;left:23px;top:618px;width:1257px;height:1px;background:#d1d1d1;"></div><div style="position:absolute;left:0px;top:633px;width:23px;height:1px;background:#e2e2e2;"></div><div style="position:absolute;left:23px;top:633px;width:1257px;height:1px;background:#d1d1d1;"></div><div style="position:absolute;left:0px;top:648px;width:23px;height:1px;background:#e2e2e2;"></div><div style="position:absolute;left:23px;top:648px;width:1257px;height:1px;background:#d1d1d1;"></div><div style="position:absolute;left:0px;top:663px;width:23px;height:1px;background:#e2e2e2;"></div><div style="position:absolute;left:23px;top:663px;width:1257px;height:1px;background:#d1d1d1;"></div><div style="position:absolute;left:0px;top:168px;width:1280px;height:1px;background:#c6c6c6;"></div><div style="position:absolute;left:23px;top:147px;width:1px;height:527px;background:#c6c6c6;"></div><div style="position:absolute;left:85px;top:148px;width:1px;height:20px;background:linear-gradient(#ececec,#d4d4d4 40%);"></div><div style="position:absolute;left:85px;top:169px;width:1px;height:505px;background:#d1d1d1;"></div><div style="position:absolute;left:166px;top:148px;width:1px;height:20px;background:linear-gradient(#ececec,#d4d4d4 40%);"></div><div style="position:absolute;left:166px;top:169px;width:1px;height:505px;background:#d1d1d1;"></div><div style="position:absolute;left:253px;top:148px;width:1px;height:20px;background:linear-gradient(#ececec,#d4d4d4 40%);"></div><div style="position:absolute;left:253px;top:169px;width:1px;height:505px;background:#d1d1d1;"></div><div style="position:absolute;left:340px;top:148px;width:1px;height:20px;background:linear-gradient(#ececec,#d4d4d4 40%);"></div><div style="position:absolute;left:340px;top:169px;width:1px;height:505px;background:#d1d1d1;"></div><div style="position:absolute;left:427px;top:148px;width:1px;height:20px;background:linear-gradient(#ececec,#d4d4d4 40%);"></div><div style="position:absolute;left:427px;top:169px;width:1px;height:505px;background:#d1d1d1;"></div><div style="position:absolute;left:514px;top:148px;width:1px;height:20px;background:linear-gradient(#ececec,#d4d4d4 40%);"></div><div style="position:absolute;left:514px;top:169px;width:1px;height:505px;background:#d1d1d1;"></div><div style="position:absolute;left:620px;top:148px;width:1px;height:20px;background:linear-gradient(#ececec,#d4d4d4 40%);"></div><div style="position:absolute;left:620px;top:169px;width:1px;height:505px;background:#d1d1d1;"></div><div style="position:absolute;left:707px;top:148px;width:1px;height:20px;background:linear-gradient(#ececec,#d4d4d4 40%);"></div><div style="position:absolute;left:707px;top:169px;width:1px;height:505px;background:#d1d1d1;"></div><div style="position:absolute;left:787px;top:148px;width:1px;height:20px;background:linear-gradient(#ececec,#d4d4d4 40%);"></div><div style="position:absolute;left:787px;top:169px;width:1px;height:505px;background:#d1d1d1;"></div><div style="position:absolute;left:874px;top:148px;width:1px;height:20px;background:linear-gradient(#ececec,#d4d4d4 40%);"></div><div style="position:absolute;left:874px;top:169px;width:1px;height:505px;background:#d1d1d1;"></div><div style="position:absolute;left:961px;top:148px;width:1px;height:20px;background:linear-gradient(#ececec,#d4d4d4 40%);"></div><div style="position:absolute;left:961px;top:169px;width:1px;height:505px;background:#d1d1d1;"></div><div style="position:absolute;left:1048px;top:148px;width:1px;height:20px;background:linear-gradient(#ececec,#d4d4d4 40%);"></div><div style="position:absolute;left:1048px;top:169px;width:1px;height:505px;background:#d1d1d1;"></div><div style="position:absolute;left:1135px;top:148px;width:1px;height:20px;background:linear-gradient(#ececec,#d4d4d4 40%);"></div><div style="position:absolute;left:1135px;top:169px;width:1px;height:505px;background:#d1d1d1;"></div><div style="position:absolute;left:1222px;top:148px;width:1px;height:20px;background:linear-gradient(#ececec,#d4d4d4 40%);"></div><div style="position:absolute;left:1222px;top:169px;width:1px;height:505px;background:#d1d1d1;"></div><svg style="position:absolute;left:5px;top:149px;" width="18" height="18" viewBox="0 0 18 18"><path d="M16.3 1.6 V16.6 H1.3 Z" fill="#d7d7d7"/></svg><div style="position:absolute;top:147.09px;font-size:11px;line-height:20px;color:#444;font-weight:normal;white-space:pre;left:-244.8px;width:600px;text-align:center;">A</div><div style="position:absolute;top:147.09px;font-size:11px;line-height:20px;color:#444;font-weight:normal;white-space:pre;left:-173.3px;width:600px;text-align:center;">B</div><div style="position:absolute;top:147.09px;font-size:11px;line-height:20px;color:#444;font-weight:normal;white-space:pre;left:-89.30000000000001px;width:600px;text-align:center;">C</div><div style="position:absolute;top:147.09px;font-size:11px;line-height:20px;color:#444;font-weight:normal;white-space:pre;left:-2.3000000000000114px;width:600px;text-align:center;">D</div><div style="position:absolute;top:147.09px;font-size:11px;line-height:20px;color:#444;font-weight:normal;white-space:pre;left:84.69999999999999px;width:600px;text-align:center;">E</div><div style="position:absolute;top:147.09px;font-size:11px;line-height:20px;color:#444;font-weight:normal;white-space:pre;left:171.7px;width:600px;text-align:center;">F</div><div style="position:absolute;top:147.09px;font-size:11px;line-height:20px;color:#444;font-weight:normal;white-space:pre;left:268.20000000000005px;width:600px;text-align:center;">G</div><div style="position:absolute;top:147.02px;font-size:11.2px;line-height:20px;color:#217346;font-weight:bold;white-space:pre;left:364.70000000000005px;width:600px;text-align:center;">H</div><div style="position:absolute;top:147.09px;font-size:11px;line-height:20px;color:#444;font-weight:normal;white-space:pre;left:448.20000000000005px;width:600px;text-align:center;">I</div><div style="position:absolute;top:147.09px;font-size:11px;line-height:20px;color:#444;font-weight:normal;white-space:pre;left:531.7px;width:600px;text-align:center;">J</div><div style="position:absolute;top:147.09px;font-size:11px;line-height:20px;color:#444;font-weight:normal;white-space:pre;left:618.7px;width:600px;text-align:center;">K</div><div style="position:absolute;top:147.09px;font-size:11px;line-height:20px;color:#444;font-weight:normal;white-space:pre;left:705.7px;width:600px;text-align:center;">L</div><div style="position:absolute;top:147.09px;font-size:11px;line-height:20px;color:#444;font-weight:normal;white-space:pre;left:792.7px;width:600px;text-align:center;">M</div><div style="position:absolute;top:147.09px;font-size:11px;line-height:20px;color:#444;font-weight:normal;white-space:pre;left:879.7px;width:600px;text-align:center;">N</div><div style="position:absolute;top:147.09px;font-size:11px;line-height:20px;color:#444;font-weight:normal;white-space:pre;left:966.7px;width:600px;text-align:center;">O</div><div style="position:absolute;top:168.14px;font-size:10px;line-height:20px;color:#404040;font-weight:normal;white-space:pre;left:-288px;width:600px;text-align:center;">1</div><div style="position:absolute;top:183.14px;font-size:10px;line-height:20px;color:#404040;font-weight:normal;white-space:pre;left:-288px;width:600px;text-align:center;">2</div><div style="position:absolute;top:198.14px;font-size:10px;line-height:20px;color:#404040;font-weight:normal;white-space:pre;left:-288px;width:600px;text-align:center;">3</div><div style="position:absolute;top:213.14px;font-size:10px;line-height:20px;color:#404040;font-weight:normal;white-space:pre;left:-288px;width:600px;text-align:center;">4</div><div style="position:absolute;top:228.14px;font-size:10px;line-height:20px;color:#404040;font-weight:normal;white-space:pre;left:-288px;width:600px;text-align:center;">5</div><div style="position:absolute;top:243.14px;font-size:10px;line-height:20px;color:#404040;font-weight:normal;white-space:pre;left:-288px;width:600px;text-align:center;">6</div><div style="position:absolute;top:258.14px;font-size:10px;line-height:20px;color:#404040;font-weight:normal;white-space:pre;left:-288px;width:600px;text-align:center;">7</div><div style="position:absolute;top:273.14px;font-size:10px;line-height:20px;color:#404040;font-weight:normal;white-space:pre;left:-288px;width:600px;text-align:center;">8</div><div style="position:absolute;top:288.14px;font-size:10px;line-height:20px;color:#404040;font-weight:normal;white-space:pre;left:-288px;width:600px;text-align:center;">9</div><div style="position:absolute;top:303.14px;font-size:10px;line-height:20px;color:#404040;font-weight:normal;white-space:pre;left:-288px;width:600px;text-align:center;">10</div><div style="position:absolute;top:318.14px;font-size:10px;line-height:20px;color:#404040;font-weight:normal;white-space:pre;left:-288px;width:600px;text-align:center;">11</div><div style="position:absolute;top:333.14px;font-size:10px;line-height:20px;color:#404040;font-weight:normal;white-space:pre;left:-288px;width:600px;text-align:center;">12</div><div style="position:absolute;top:348.14px;font-size:10px;line-height:20px;color:#404040;font-weight:normal;white-space:pre;left:-288px;width:600px;text-align:center;">13</div><div style="position:absolute;top:363.14px;font-size:10px;line-height:20px;color:#404040;font-weight:normal;white-space:pre;left:-288px;width:600px;text-align:center;">14</div><div style="position:absolute;top:378.14px;font-size:10px;line-height:20px;color:#404040;font-weight:normal;white-space:pre;left:-288px;width:600px;text-align:center;">15</div><div style="position:absolute;top:393.14px;font-size:10px;line-height:20px;color:#404040;font-weight:normal;white-space:pre;left:-288px;width:600px;text-align:center;">16</div><div style="position:absolute;top:408.14px;font-size:10px;line-height:20px;color:#404040;font-weight:normal;white-space:pre;left:-288px;width:600px;text-align:center;">17</div><div style="position:absolute;top:423.14px;font-size:10px;line-height:20px;color:#404040;font-weight:normal;white-space:pre;left:-288px;width:600px;text-align:center;">18</div><div style="position:absolute;top:438.14px;font-size:10px;line-height:20px;color:#404040;font-weight:normal;white-space:pre;left:-288px;width:600px;text-align:center;">19</div><div style="position:absolute;top:453.14px;font-size:10px;line-height:20px;color:#404040;font-weight:normal;white-space:pre;left:-288px;width:600px;text-align:center;">20</div><div style="position:absolute;top:468.14px;font-size:10px;line-height:20px;color:#404040;font-weight:normal;white-space:pre;left:-288px;width:600px;text-align:center;">21</div><div style="position:absolute;top:483.14px;font-size:10px;line-height:20px;color:#404040;font-weight:normal;white-space:pre;left:-288px;width:600px;text-align:center;">22</div><div style="position:absolute;top:498.14px;font-size:10px;line-height:20px;color:#404040;font-weight:normal;white-space:pre;left:-288px;width:600px;text-align:center;">23</div><div style="position:absolute;top:512.90px;font-size:9.8px;line-height:20px;color:#1f7a4a;font-weight:bold;white-space:pre;left:-288px;width:600px;text-align:center;">24</div><div style="position:absolute;top:528.13px;font-size:10px;line-height:20px;color:#404040;font-weight:normal;white-space:pre;left:-288px;width:600px;text-align:center;">25</div><div style="position:absolute;top:543.13px;font-size:10px;line-height:20px;color:#404040;font-weight:normal;white-space:pre;left:-288px;width:600px;text-align:center;">26</div><div style="position:absolute;top:558.13px;font-size:10px;line-height:20px;color:#404040;font-weight:normal;white-space:pre;left:-288px;width:600px;text-align:center;">27</div><div style="position:absolute;top:573.13px;font-size:10px;line-height:20px;color:#404040;font-weight:normal;white-space:pre;left:-288px;width:600px;text-align:center;">28</div><div style="position:absolute;top:588.13px;font-size:10px;line-height:20px;color:#404040;font-weight:normal;white-space:pre;left:-288px;width:600px;text-align:center;">29</div><div style="position:absolute;top:603.13px;font-size:10px;line-height:20px;color:#404040;font-weight:normal;white-space:pre;left:-288px;width:600px;text-align:center;">30</div><div style="position:absolute;top:618.13px;font-size:10px;line-height:20px;color:#404040;font-weight:normal;white-space:pre;left:-288px;width:600px;text-align:center;">31</div><div style="position:absolute;top:633.13px;font-size:10px;line-height:20px;color:#404040;font-weight:normal;white-space:pre;left:-288px;width:600px;text-align:center;">32</div><div style="position:absolute;top:648.13px;font-size:10px;line-height:20px;color:#404040;font-weight:normal;white-space:pre;left:-288px;width:600px;text-align:center;">33</div><div style="position:absolute;top:663.13px;font-size:10px;line-height:20px;color:#404040;font-weight:normal;white-space:pre;left:-288px;width:600px;text-align:center;">34</div><div style="position:absolute;left:24px;top:169px;width:850px;height:15px;background:#f8ad6f;"></div><div style="position:absolute;left:340px;top:183px;width:88px;height:91px;background:#fff;"></div><div style="position:absolute;left:340px;top:288px;width:88px;height:16px;background:#b4dfca;"></div><div style="position:absolute;left:874px;top:259px;width:1px;height:14px;background:#fff;"></div><div style="position:absolute;left:961px;top:259px;width:1px;height:14px;background:#fff;"></div><svg style="position:absolute;left:701px;top:168px;" width="7" height="7" viewBox="0 0 7 7"><path d="M0.5 0.5 H6.5 V6.5 Z" fill="#e0131a"/></svg><svg style="position:absolute;left:868px;top:168px;" width="7" height="7" viewBox="0 0 7 7"><path d="M0.5 0.5 H6.5 V6.5 Z" fill="#e0131a"/></svg><div style="position:absolute;left:620px;top:167px;width:88px;height:2px;background:#217346;"></div><div style="position:absolute;top:167.84px;font-size:10px;line-height:20px;color:#000;font-weight:bold;white-space:pre;left:-245.5px;width:600px;text-align:center;">Date</div><div style="position:absolute;top:167.84px;font-size:10px;line-height:20px;color:#000;font-weight:bold;white-space:pre;left:-174.0px;width:600px;text-align:center;">Wallet</div><div style="position:absolute;top:167.84px;font-size:10px;line-height:20px;color:#000;font-weight:bold;white-space:pre;left:-90.0px;width:600px;text-align:center;">Asset</div><div style="position:absolute;top:167.84px;font-size:10px;line-height:20px;color:#000;font-weight:bold;white-space:pre;left:-3.0px;width:600px;text-align:center;">Amount</div><div style="position:absolute;top:167.84px;font-size:10px;line-height:20px;color:#000;font-weight:bold;white-space:pre;left:84.0px;width:600px;text-align:center;">Rate (USD)</div><div style="position:absolute;top:167.84px;font-size:10px;line-height:20px;color:#000;font-weight:bold;white-space:pre;left:171.0px;width:600px;text-align:center;">Total (USD)</div><div style="position:absolute;top:167.84px;font-size:10px;line-height:20px;color:#000;font-weight:bold;white-space:pre;left:267.5px;width:600px;text-align:center;">Current Price (USD)</div><div style="position:absolute;top:167.84px;font-size:10px;line-height:20px;color:#000;font-weight:bold;white-space:pre;left:364.0px;width:600px;text-align:center;">Profit</div><div style="position:absolute;top:167.84px;font-size:10px;line-height:20px;color:#000;font-weight:bold;white-space:pre;left:447.5px;width:600px;text-align:center;">%</div><div style="position:absolute;top:167.84px;font-size:10px;line-height:20px;color:#000;font-weight:bold;white-space:pre;left:531.0px;width:600px;text-align:center;">Total Profit</div><div style="position:absolute;top:182.84px;font-size:10px;line-height:20px;color:#000;font-weight:normal;white-space:pre;left:-316.2px;width:400px;text-align:right;">3/25/2016</div><div style="position:absolute;top:182.84px;font-size:10px;line-height:20px;color:#000;font-weight:normal;white-space:pre;left:88px;">Jaxx</div><div style="position:absolute;top:182.84px;font-size:10px;line-height:20px;color:#000;font-weight:normal;white-space:pre;left:169px;">Bitcoin</div><div style="position:absolute;top:182.84px;font-size:10px;line-height:20px;color:#000;font-weight:normal;white-space:pre;left:-61.19999999999999px;width:400px;text-align:right;">10.00000000</div><div style="position:absolute;top:182.84px;font-size:10px;line-height:20px;color:#000;font-weight:normal;white-space:pre;left:346.5px;">$</div><div style="position:absolute;top:182.84px;font-size:10px;line-height:20px;color:#000;font-weight:normal;white-space:pre;left:22px;width:400px;text-align:right;">254.00000000</div><div style="position:absolute;top:182.84px;font-size:10px;line-height:20px;color:#000;font-weight:normal;white-space:pre;left:112.79999999999995px;width:400px;text-align:right;">$2,540.00</div><div style="position:absolute;top:182.84px;font-size:10px;line-height:20px;color:#000;font-weight:normal;white-space:pre;left:520.5px;">$</div><div style="position:absolute;top:182.84px;font-size:10px;line-height:20px;color:#000;font-weight:normal;white-space:pre;left:215px;width:400px;text-align:right;">9,824.70500000</div><div style="position:absolute;left:621px;top:184px;width:86px;height:14px;overflow:hidden;font-size:10px;line-height:14px;white-space:pre;text-align:left;padding-left:4px;box-sizing:border-box;letter-spacing:0px;-webkit-text-stroke:0.2px #000;"><span style="position:relative;top:1.7px">################</span></div><div style="position:absolute;left:625.0px;top:193px;width:82.0px;height:1px;background:rgba(0,0,0,0.75);"></div><div style="position:absolute;top:182.84px;font-size:10px;line-height:20px;color:#000;font-weight:normal;white-space:pre;left:385.5px;width:400px;text-align:right;">3767.99%</div><div style="position:absolute;top:197.84px;font-size:10px;line-height:20px;color:#000;font-weight:normal;white-space:pre;left:-316.2px;width:400px;text-align:right;">1/5/2017</div><div style="position:absolute;top:197.84px;font-size:10px;line-height:20px;color:#000;font-weight:normal;white-space:pre;left:88px;">Bitfinex</div><div style="position:absolute;top:197.84px;font-size:10px;line-height:20px;color:#000;font-weight:normal;white-space:pre;left:169px;">Ethereum</div><div style="position:absolute;top:197.84px;font-size:10px;line-height:20px;color:#000;font-weight:normal;white-space:pre;left:-61.19999999999999px;width:400px;text-align:right;">149.00000000</div><div style="position:absolute;top:197.84px;font-size:10px;line-height:20px;color:#000;font-weight:normal;white-space:pre;left:346.5px;">$</div><div style="position:absolute;top:197.84px;font-size:10px;line-height:20px;color:#000;font-weight:normal;white-space:pre;left:22px;width:400px;text-align:right;">14.00000000</div><div style="position:absolute;top:197.84px;font-size:10px;line-height:20px;color:#000;font-weight:normal;white-space:pre;left:112.79999999999995px;width:400px;text-align:right;">$2,086.00</div><div style="position:absolute;top:197.84px;font-size:10px;line-height:20px;color:#000;font-weight:normal;white-space:pre;left:267.5px;width:600px;text-align:center;">804.76</div><div style="position:absolute;left:621px;top:199px;width:86px;height:14px;overflow:hidden;font-size:10px;line-height:14px;white-space:pre;text-align:center;padding-left:4px;box-sizing:border-box;letter-spacing:0px;-webkit-text-stroke:0.2px #000;"><span style="position:relative;top:1.7px">############</span></div><div style="position:absolute;left:633.6px;top:208px;width:65.7px;height:1px;background:rgba(0,0,0,0.75);"></div><div style="position:absolute;top:197.84px;font-size:10px;line-height:20px;color:#000;font-weight:normal;white-space:pre;left:385.5px;width:400px;text-align:right;">5648.29%</div><div style="position:absolute;top:212.84px;font-size:10px;line-height:20px;color:#000;font-weight:normal;white-space:pre;left:-316.2px;width:400px;text-align:right;">2/2/2017</div><div style="position:absolute;top:212.84px;font-size:10px;line-height:20px;color:#000;font-weight:normal;white-space:pre;left:88px;">Jaxx</div><div style="position:absolute;top:212.84px;font-size:10px;line-height:20px;color:#000;font-weight:normal;white-space:pre;left:169px;">Bitcoin</div><div style="position:absolute;top:212.84px;font-size:10px;line-height:20px;color:#000;font-weight:normal;white-space:pre;left:-61.19999999999999px;width:400px;text-align:right;">4.00000000</div><div style="position:absolute;top:212.84px;font-size:10px;line-height:20px;color:#000;font-weight:normal;white-space:pre;left:346.5px;">$</div><div style="position:absolute;top:212.84px;font-size:10px;line-height:20px;color:#000;font-weight:normal;white-space:pre;left:22px;width:400px;text-align:right;">743.00000000</div><div style="position:absolute;top:212.84px;font-size:10px;line-height:20px;color:#000;font-weight:normal;white-space:pre;left:112.79999999999995px;width:400px;text-align:right;">$2,972.00</div><div style="position:absolute;top:212.84px;font-size:10px;line-height:20px;color:#000;font-weight:normal;white-space:pre;left:520.5px;">$</div><div style="position:absolute;top:212.84px;font-size:10px;line-height:20px;color:#000;font-weight:normal;white-space:pre;left:215px;width:400px;text-align:right;">9,824.70500000</div><div style="position:absolute;left:621px;top:214px;width:86px;height:14px;overflow:hidden;font-size:10px;line-height:14px;white-space:pre;text-align:left;padding-left:4px;box-sizing:border-box;letter-spacing:0px;-webkit-text-stroke:0.2px #000;"><span style="position:relative;top:1.7px">################</span></div><div style="position:absolute;left:625.0px;top:223px;width:82.0px;height:1px;background:rgba(0,0,0,0.75);"></div><div style="position:absolute;top:212.84px;font-size:10px;line-height:20px;color:#000;font-weight:normal;white-space:pre;left:385.5px;width:400px;text-align:right;">1222.30%</div><div style="position:absolute;top:227.84px;font-size:10px;line-height:20px;color:#000;font-weight:normal;white-space:pre;left:-316.2px;width:400px;text-align:right;">3/25/2017</div><div style="position:absolute;top:227.84px;font-size:10px;line-height:20px;color:#000;font-weight:normal;white-space:pre;left:88px;">Jaxx</div><div style="position:absolute;top:227.84px;font-size:10px;line-height:20px;color:#000;font-weight:normal;white-space:pre;left:169px;">DASH</div><div style="position:absolute;top:227.84px;font-size:10px;line-height:20px;color:#000;font-weight:normal;white-space:pre;left:-61.19999999999999px;width:400px;text-align:right;">10.00000000</div><div style="position:absolute;top:227.84px;font-size:10px;line-height:20px;color:#000;font-weight:normal;white-space:pre;left:346.5px;">$</div><div style="position:absolute;top:227.84px;font-size:10px;line-height:20px;color:#000;font-weight:normal;white-space:pre;left:22px;width:400px;text-align:right;">17.30000000</div><div style="position:absolute;top:227.84px;font-size:10px;line-height:20px;color:#000;font-weight:normal;white-space:pre;left:112.79999999999995px;width:400px;text-align:right;">$173.00</div><div style="position:absolute;top:227.84px;font-size:10px;line-height:20px;color:#000;font-weight:normal;white-space:pre;left:267.5px;width:600px;text-align:center;">607.12</div><div style="position:absolute;left:621px;top:229px;width:86px;height:14px;overflow:hidden;font-size:10px;line-height:14px;white-space:pre;text-align:left;padding-left:4px;box-sizing:border-box;letter-spacing:0px;-webkit-text-stroke:0.2px #000;"><span style="position:relative;top:1.7px">################</span></div><div style="position:absolute;left:625.0px;top:238px;width:82.0px;height:1px;background:rgba(0,0,0,0.75);"></div><div style="position:absolute;top:227.84px;font-size:10px;line-height:20px;color:#000;font-weight:normal;white-space:pre;left:385.5px;width:400px;text-align:right;">3409.36%</div><div style="position:absolute;top:242.84px;font-size:10px;line-height:20px;color:#000;font-weight:normal;white-space:pre;left:-316.2px;width:400px;text-align:right;">4/2/2017</div><div style="position:absolute;top:242.84px;font-size:10px;line-height:20px;color:#000;font-weight:normal;white-space:pre;left:88px;">Poloniex</div><div style="position:absolute;top:242.84px;font-size:10px;line-height:20px;color:#000;font-weight:normal;white-space:pre;left:169px;">Zcash</div><div style="position:absolute;top:242.84px;font-size:10px;line-height:20px;color:#000;font-weight:normal;white-space:pre;left:-61.19999999999999px;width:400px;text-align:right;">50.00000000</div><div style="position:absolute;top:242.84px;font-size:10px;line-height:20px;color:#000;font-weight:normal;white-space:pre;left:346.5px;">$</div><div style="position:absolute;top:242.84px;font-size:10px;line-height:20px;color:#000;font-weight:normal;white-space:pre;left:22px;width:400px;text-align:right;">70.76000000</div><div style="position:absolute;top:242.84px;font-size:10px;line-height:20px;color:#000;font-weight:normal;white-space:pre;left:112.79999999999995px;width:400px;text-align:right;">$3,538.00</div><div style="position:absolute;top:242.84px;font-size:10px;line-height:20px;color:#000;font-weight:normal;white-space:pre;left:267.5px;width:600px;text-align:center;">405.89</div><div style="position:absolute;left:621px;top:244px;width:86px;height:14px;overflow:hidden;font-size:10px;line-height:14px;white-space:pre;text-align:left;padding-left:4px;box-sizing:border-box;letter-spacing:0px;-webkit-text-stroke:0.2px #000;"><span style="position:relative;top:1.7px">################</span></div><div style="position:absolute;left:625.0px;top:253px;width:82.0px;height:1px;background:rgba(0,0,0,0.75);"></div><div style="position:absolute;top:242.84px;font-size:10px;line-height:20px;color:#000;font-weight:normal;white-space:pre;left:385.5px;width:400px;text-align:right;">473.62%</div><div style="position:absolute;top:257.84px;font-size:10px;line-height:20px;color:#000;font-weight:normal;white-space:pre;left:-316.2px;width:400px;text-align:right;">4/26/2017</div><div style="position:absolute;top:257.84px;font-size:10px;line-height:20px;color:#000;font-weight:normal;white-space:pre;left:88px;">Poloniex</div><div style="position:absolute;top:257.84px;font-size:10px;line-height:20px;color:#000;font-weight:normal;white-space:pre;left:169px;">DASH</div><div style="position:absolute;top:257.84px;font-size:10px;line-height:20px;color:#000;font-weight:normal;white-space:pre;left:-61.19999999999999px;width:400px;text-align:right;">34.00000000</div><div style="position:absolute;top:257.84px;font-size:10px;line-height:20px;color:#000;font-weight:normal;white-space:pre;left:346.5px;">$</div><div style="position:absolute;top:257.84px;font-size:10px;line-height:20px;color:#000;font-weight:normal;white-space:pre;left:22px;width:400px;text-align:right;">70.73000000</div><div style="position:absolute;top:257.84px;font-size:10px;line-height:20px;color:#000;font-weight:normal;white-space:pre;left:112.79999999999995px;width:400px;text-align:right;">$2,404.82</div><div style="position:absolute;top:257.84px;font-size:10px;line-height:20px;color:#000;font-weight:normal;white-space:pre;left:267.5px;width:600px;text-align:center;">607.12</div><div style="position:absolute;left:621px;top:259px;width:86px;height:14px;overflow:hidden;font-size:10px;line-height:14px;white-space:pre;text-align:left;padding-left:4px;box-sizing:border-box;letter-spacing:0px;-webkit-text-stroke:0.2px #000;"><span style="position:relative;top:1.7px">################</span></div><div style="position:absolute;left:625.0px;top:268px;width:82.0px;height:1px;background:rgba(0,0,0,0.75);"></div><div style="position:absolute;top:257.84px;font-size:10px;line-height:20px;color:#000;font-weight:normal;white-space:pre;left:385.5px;width:400px;text-align:right;">758.36%</div><div style="position:absolute;top:272.84px;font-size:10px;line-height:20px;color:#000;font-weight:normal;white-space:pre;left:-316.2px;width:400px;text-align:right;">4/26/2017</div><div style="position:absolute;top:272.84px;font-size:10px;line-height:20px;color:#000;font-weight:normal;white-space:pre;left:88px;">Jaxx</div><div style="position:absolute;top:272.84px;font-size:10px;line-height:20px;color:#000;font-weight:normal;white-space:pre;left:169px;">Bitcoin</div><div style="position:absolute;top:272.84px;font-size:10px;line-height:20px;color:#000;font-weight:normal;white-space:pre;left:-61.19999999999999px;width:400px;text-align:right;">-1.00000000</div><div style="position:absolute;left:341px;top:274px;width:86px;height:14px;overflow:hidden;font-size:10px;line-height:14px;white-space:pre;text-align:left;padding-left:4px;box-sizing:border-box;letter-spacing:0px;-webkit-text-stroke:0.2px #000;"><span style="position:relative;top:1.7px">################</span></div><div style="position:absolute;left:345.0px;top:283px;width:82.0px;height:1px;background:rgba(0,0,0,0.75);"></div><div style="position:absolute;top:272.84px;font-size:10px;line-height:20px;color:#000;font-weight:normal;white-space:pre;left:112.79999999999995px;width:400px;text-align:right;">-$1,290.52</div><div style="position:absolute;top:272.84px;font-size:10px;line-height:20px;color:#000;font-weight:normal;white-space:pre;left:520.5px;">$</div><div style="position:absolute;top:272.84px;font-size:10px;line-height:20px;color:#000;font-weight:normal;white-space:pre;left:215px;width:400px;text-align:right;">9,824.70500000</div><div style="position:absolute;top:272.84px;font-size:10px;line-height:20px;color:#000;font-weight:normal;white-space:pre;left:626px;">$</div><div style="position:absolute;top:272.84px;font-size:10px;line-height:20px;color:#000;font-weight:normal;white-space:pre;left:306px;width:400px;text-align:right;">(8,534.19)</div><div style="position:absolute;top:272.84px;font-size:10px;line-height:20px;color:#000;font-weight:normal;white-space:pre;left:385.5px;width:400px;text-align:right;">661.30%</div><div style="position:absolute;top:287.84px;font-size:10px;line-height:20px;color:#000;font-weight:normal;white-space:pre;left:-316.2px;width:400px;text-align:right;">6/26/2017</div><div style="position:absolute;top:287.84px;font-size:10px;line-height:20px;color:#000;font-weight:normal;white-space:pre;left:88px;">Trezor</div><div style="position:absolute;top:287.84px;font-size:10px;line-height:20px;color:#000;font-weight:normal;white-space:pre;left:169px;">Status Network</div><div style="position:absolute;top:287.84px;font-size:10px;line-height:20px;color:#000;font-weight:normal;white-space:pre;left:-61.19999999999999px;width:400px;text-align:right;">10,416.60</div><div style="position:absolute;top:287.84px;font-size:10px;line-height:20px;color:#000;font-weight:normal;white-space:pre;left:346.5px;">$</div><div style="position:absolute;top:287.84px;font-size:10px;line-height:20px;color:#000;font-weight:normal;white-space:pre;left:22px;width:400px;text-align:right;">0.11000000</div><div style="position:absolute;top:287.84px;font-size:10px;line-height:20px;color:#000;font-weight:normal;white-space:pre;left:112.79999999999995px;width:400px;text-align:right;">$1,145.83</div><div style="position:absolute;top:287.84px;font-size:10px;line-height:20px;color:#000;font-weight:normal;white-space:pre;left:267.5px;width:600px;text-align:center;">0.1664</div><div style="position:absolute;top:287.84px;font-size:10px;line-height:20px;color:#000;font-weight:normal;white-space:pre;left:626.5px;">$</div><div style="position:absolute;top:287.84px;font-size:10px;line-height:20px;color:#000;font-weight:normal;white-space:pre;left:302px;width:400px;text-align:right;">587.49624000</div><div style="position:absolute;top:287.84px;font-size:10px;line-height:20px;color:#000;font-weight:normal;white-space:pre;left:385.5px;width:400px;text-align:right;">51.27%</div><div style="position:absolute;left:788px;top:184px;width:86px;height:14px;overflow:hidden;font-size:10px;line-height:14px;white-space:pre;text-align:center;padding-left:4px;box-sizing:border-box;letter-spacing:0px;-webkit-text-stroke:0.2px #000;"><span style="position:relative;top:1.7px">############</span></div><div style="position:absolute;left:800.6px;top:193px;width:65.7px;height:1px;background:rgba(0,0,0,0.75);"></div><div style="position:absolute;left:788px;top:259px;width:86px;height:14px;overflow:hidden;"></div><div style="position:absolute;left:788px;top:258px;width:87px;height:16px;overflow:hidden;"><div style="position:absolute;left:2.5px;top:-0.16px;font-size:10px;line-height:20px;font-weight:bold;white-space:pre;">Change it and use</div></div><div style="position:absolute;top:257.84px;font-size:10px;line-height:20px;color:#000;font-weight:bold;white-space:pre;left:877.5px;">File’ -&gt; ‘Make a copy’</div><svg style="position:absolute;left:872px;top:209px;" width="62" height="48" viewBox="0 0 62 48">
<ellipse cx="30.3" cy="23.9" rx="24.9" ry="19.4" fill="none" stroke="#41a0c4" stroke-width="3.1"/>
<path d="M17.6 13.4 Q30.5 10.8 43.2 13.4 V31 Q36.8 34.6 30.4 37.2 Q24 34.6 17.6 31 Z" fill="none" stroke="#41a0c4" stroke-width="3" stroke-linejoin="round"/>
<path d="M36.2 21 H42" stroke="#41a0c4" stroke-width="2.8"/>
</svg><div style="position:absolute;left:939.5px;top:217.3px;font-size:26px;line-height:34px;color:#41a0c4;white-space:pre;transform-origin:0 0;transform:scaleX(1.215);-webkit-text-stroke:0.25px #41a0c4;">CoinFabrik</div><div style="position:absolute;left:619px;top:512px;width:90px;height:2px;background:#1e6b43;"></div><div style="position:absolute;left:619px;top:512px;width:2.4px;height:18px;background:#1e6b43;"></div><div style="position:absolute;left:707px;top:512px;width:2px;height:12.8px;background:#1e6b43;"></div><div style="position:absolute;left:619px;top:528px;width:85px;height:2px;background:#1e6b43;"></div><div style="position:absolute;left:704px;top:525px;width:7px;height:7px;background:#fff;"></div><div style="position:absolute;left:705px;top:526px;width:5px;height:5px;background:#1e6b43;"></div><div style="position:absolute;left:22px;top:513px;width:2px;height:16px;background:#217346;"></div><div style="position:absolute;left:0px;top:674px;width:1280px;height:26px;background:linear-gradient(#efefef,#eaeaea);"></div><div style="position:absolute;left:0px;top:674px;width:1280px;height:1px;background:#d8d8d8;"></div><svg style="position:absolute;left:11.2px;top:680px;" width="40" height="14" viewBox="0 0 40 14">
<path d="M10.5 1.5 V11.5 L3.5 6.5 Z" fill="#8e8e8e"/>
<path d="M27 1.5 V11.5 L34 6.5 Z" fill="#8e8e8e"/>
</svg><div style="position:absolute;left:60px;top:675px;width:1px;height:21px;background:#d2d2d2;"></div><div style="position:absolute;left:135px;top:675px;width:1px;height:21px;background:#d2d2d2;"></div><div style="position:absolute;left:319px;top:675px;width:1px;height:21px;background:#d2d2d2;"></div><div style="position:absolute;top:677.23px;font-size:12.6px;line-height:20px;color:#5e5e5e;font-weight:normal;white-space:pre;left:72.7px;">Positions</div><div style="position:absolute;top:677.29px;font-size:12.45px;line-height:20px;color:#5e5e5e;font-weight:normal;white-space:pre;left:155px;">Prices</div><div style="position:absolute;left:209px;top:674px;width:72px;height:22px;background:#fff;border-radius:0 0 3px 3px;box-shadow:0 1px 1.5px rgba(0,0,0,0.3);"></div><div style="position:absolute;top:677.48px;font-size:11.9px;line-height:20px;color:#27875a;font-weight:bold;white-space:pre;left:225px;">History</div><svg style="position:absolute;left:294px;top:680px;" width="14" height="13" viewBox="0 0 14 13"><path d="M7 1.5 V11.5 M2 6.5 H12" stroke="#444" stroke-width="2"/></svg><div style="position:absolute;left:0px;top:701px;width:1280px;height:20px;background:linear-gradient(#e4e4e4,#d0d0d0);"></div><div style="position:absolute;left:0px;top:700px;width:1280px;height:1px;background:#b9b9b9;"></div><div style="position:absolute;top:702.14px;font-size:12.3px;line-height:20px;color:#3d3d3d;font-weight:normal;white-space:pre;left:24.6px;">Ready</div><div style="position:absolute;left:996px;top:701px;width:36px;height:20px;background:#a9a9a9;"></div><svg style="position:absolute;left:1006px;top:704px;" width="16" height="15" viewBox="0 0 16 15">
<g fill="none" stroke="#f4f4f4" stroke-width="1.2">
<rect x="1.6" y="1.6" width="12.2" height="11.6"/>
<line x1="5.7" y1="1.6" x2="5.7" y2="13.2"/><line x1="9.8" y1="1.6" x2="9.8" y2="13.2"/>
<line x1="1.6" y1="5.5" x2="13.8" y2="5.5"/><line x1="1.6" y1="9.3" x2="13.8" y2="9.3"/>
</g></svg><svg style="position:absolute;left:1041px;top:704px;" width="17" height="15" viewBox="0 0 17 15">
<rect x="1.2" y="1" width="13.5" height="12.6" fill="none" stroke="#5a5a5a" stroke-width="1.2"/>
<rect x="4" y="3.4" width="8" height="8" fill="none" stroke="#5a5a5a" stroke-width="0.9"/>
<g stroke="#5a5a5a" stroke-width="0.9"><line x1="5.5" y1="5.4" x2="10.5" y2="5.4"/><line x1="5.5" y1="7.4" x2="10.5" y2="7.4"/><line x1="5.5" y1="9.4" x2="10.5" y2="9.4"/></g>
</svg><div style="position:absolute;left:1075px;top:710.3px;width:8px;height:2px;background:#555;"></div><div style="position:absolute;left:1090px;top:709.8px;width:100px;height:3.8px;background:#9b9b9b;border-radius:2px;"></div><svg style="position:absolute;left:1133px;top:704px;" width="15" height="15" viewBox="0 0 15 15"><circle cx="7.4" cy="7.4" r="5.8" fill="#fbfbfb" stroke="#b0b0b0" stroke-width="0.8"/></svg><svg style="position:absolute;left:1196px;top:705px;" width="11" height="12" viewBox="0 0 11 12"><path d="M5.2 1.5 V10.5 M1 6 H9.5" stroke="#555" stroke-width="2"/></svg><div style="position:absolute;top:701.70px;font-size:13px;line-height:20px;color:#4a4a4a;font-weight:normal;white-space:pre;left:1222.5px;">100%</div>
</body></html>
